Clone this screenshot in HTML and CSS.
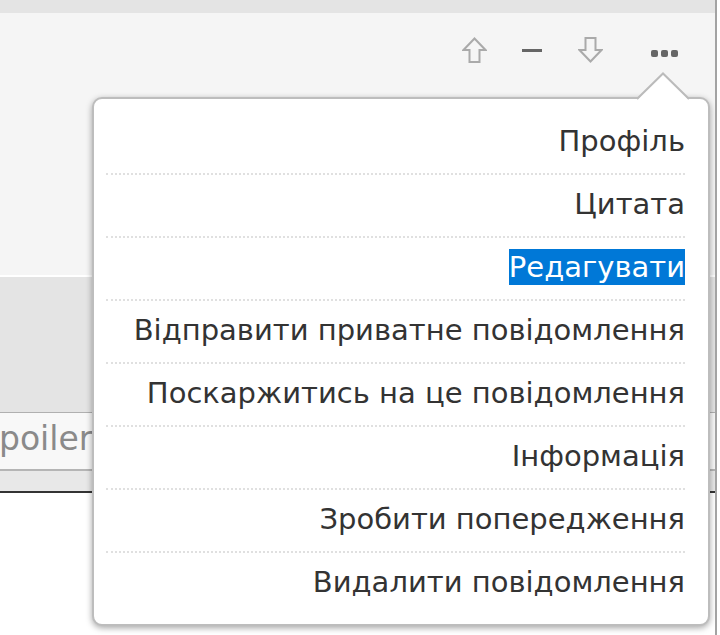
FILE: index.html
```html
<!DOCTYPE html>
<html lang="uk">
<head>
    <meta charset="UTF-8">
    <meta name="viewport" content="width=device-width, initial-scale=1.0">
    <title>Повідомлення</title>
    <link rel="stylesheet" href="styles.css">
</head>
<body>
    <div class="page">
        <div class="topbar"></div>
        <div class="post">
            <div class="post-tools">
                <span class="tool tool-up">
                    <svg width="25" height="26" viewBox="0 0 25 26"><path d="M12.5 1.5 L23.5 13 L17.5 13 L17.5 25 L7.5 25 L7.5 13 L1.5 13 Z" fill="none" stroke="#aaa" stroke-width="2" stroke-linejoin="miter"/></svg>
                </span>
                <span class="tool tool-minus"></span>
                <span class="tool tool-down">
                    <svg width="25" height="26" viewBox="0 0 25 26"><path d="M12.5 24.5 L23.5 13 L17.5 13 L17.5 1 L7.5 1 L7.5 13 L1.5 13 Z" fill="none" stroke="#aaa" stroke-width="2" stroke-linejoin="miter"/></svg>
                </span>
                <span class="tool tool-more">
                    <i></i><i></i><i></i>
                </span>
            </div>
        </div>
        <div class="reply-bar"></div>
        <div class="editor">
            <div class="editor-field">Spoiler</div>
            <div class="editor-foot"></div>
        </div>

        <div class="menu">
            <svg class="menu-arrow" width="52" height="29" viewBox="0 0 52 29"><polygon points="1,27 26,1.5 51,27 51,29 1,29" fill="#fff"/><polyline points="0,27 26,1.5 52,27" fill="none" stroke="#bbb" stroke-width="2"/></svg>
            <ul class="menu-list">
                <li>Профіль</li>
                <li>Цитата</li>
                <li><span class="selected">Редагувати</span></li>
                <li>Відправити приватне повідомлення</li>
                <li>Поскаржитись на це повідомлення</li>
                <li>Інформація</li>
                <li>Зробити попередження</li>
                <li>Видалити повідомлення</li>
            </ul>
        </div>
    </div>
</body>
</html>
```

FILE: styles.css
```css
body {
    margin: 0;
    background-color: #fff;
    font-family: 'DejaVu Sans', Verdana, sans-serif;
}

.page {
    position: relative;
    width: 715px;
    height: 635px;
    border-right: 2px solid #a3a3a3;
    overflow: hidden;
}

.topbar {
    height: 13px;
    background-color: #e4e4e4;
}

.post {
    height: 262px;
    background-color: #f5f5f5;
    border-bottom: 2px solid #fff;
}

.post-tools {
    display: flex;
    justify-content: flex-end;
    align-items: center;
    height: 26px;
    padding: 24px 37px 0 0;
}

.tool {
    display: block;
}

.tool svg {
    display: block;
}

.tool-minus {
    width: 20px;
    height: 3px;
    margin-left: 35px;
    background-color: #666;
}

.tool-down {
    margin-left: 36px;
}

.tool-more {
    display: flex;
    gap: 3px;
    margin-left: 48px;
    margin-top: 6px;
}

.tool-more i {
    width: 7px;
    height: 7px;
    border-radius: 2px;
    background-color: #666;
}

.reply-bar {
    height: 135px;
    background-color: #e4e4e4;
}

.editor {
    border-top: 1px solid #b0b0b0;
}

.editor-field {
    height: 56px;
    line-height: 52px;
    background-color: #f8f8f8;
    border-bottom: 2px solid #b5b5b5;
    font-size: 33px;
    color: #8a8a8a;
    text-indent: -22px;
    white-space: nowrap;
    overflow: hidden;
}

.editor-foot {
    height: 20px;
    background-color: #e8e8e8;
    border-bottom: 2px solid #333;
}

.menu {
    position: absolute;
    top: 97px;
    left: 92px;
    width: 614px;
    height: 525px;
    background-color: #fff;
    border: 2px solid #bdbdbd;
    border-radius: 10px;
    box-shadow: 0 2px 6px rgba(0, 0, 0, 0.35);
}

.menu-arrow {
    position: absolute;
    top: -27px;
    left: 543px;
}

.menu-list {
    list-style: none;
    margin: 0;
    padding: 13px 23px 0 12px;
}

.menu-list li {
    height: 61px;
    line-height: 59px;
    text-align: right;
    font-size: 29px;
    color: #333;
    border-bottom: 2px dotted #e0e0e0;
    white-space: nowrap;
}

.menu-list li:last-child {
    border-bottom: none;
}

.selected {
    background-color: #0078d7;
    color: #fff;
    padding: 1px 0;
}
```
